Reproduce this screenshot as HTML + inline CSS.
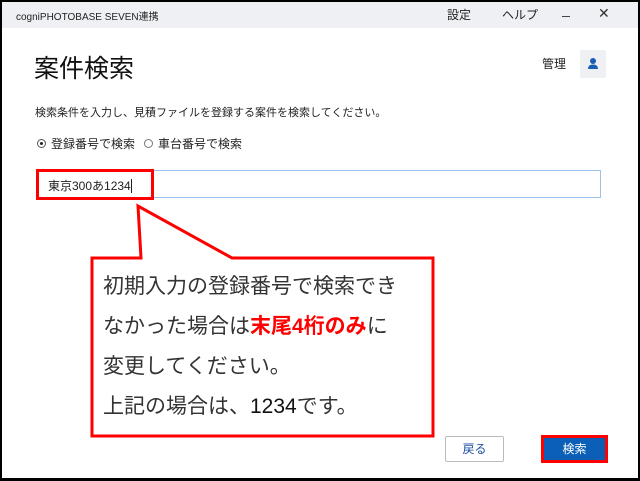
<!DOCTYPE html>
<html><head><meta charset="utf-8"><style>
*{margin:0;padding:0;box-sizing:border-box}
body{width:640px;height:481px;overflow:hidden;background:#000;font-family:"Liberation Sans","Noto Sans CJK JP",sans-serif;position:relative}
.win{position:absolute;left:2px;top:2px;width:636px;height:476px;background:#fff}
.tb{position:absolute;left:0;top:0;width:636px;height:26px;background:#eef0f4}
.a{position:absolute;white-space:nowrap}
</style></head><body>
<div class="win">
<div class="tb"></div>
<div class="a" style="left:14px;top:6px;font-size:10px;color:#222">cogniPHOTOBASE SEVEN連携</div>
<div class="a" style="left:445px;top:4px;font-size:12px;color:#222">設定</div>
<div class="a" style="left:500px;top:4px;font-size:12px;color:#222">ヘルプ</div>
<div class="a" style="left:560px;top:14px;width:8px;height:1px;background:#444"></div>
<div class="a" style="left:596px;top:3px;font-size:14px;color:#333">✕</div>
<div class="a" style="left:32px;top:47px;font-size:25px;color:#111">案件検索</div>
<div class="a" style="left:540px;top:53px;font-size:12px;color:#222">管理</div>
<div class="a" style="left:578px;top:48px;width:26px;height:28px;background:#eef0f3;border-radius:2px"></div>
<svg class="a" style="left:584px;top:55px" width="14" height="14"><circle cx="7" cy="4" r="3" fill="#1a5fb4"/><path d="M2 12 Q2 7.5 7 7.5 Q12 7.5 12 12Z" fill="#1a5fb4"/></svg>
<div class="a" style="left:33px;top:102px;font-size:11px;color:#222">検索条件を入力し、見積ファイルを登録する案件を検索してください。</div>
<div class="a" style="left:35px;top:137px;width:9px;height:9px;border:1px solid #555;border-radius:50%"></div>
<div class="a" style="left:38px;top:140px;width:3px;height:3px;background:#222;border-radius:50%"></div>
<div class="a" style="left:49px;top:133px;font-size:12px;color:#222">登録番号で検索</div>
<div class="a" style="left:142px;top:137px;width:9px;height:9px;border:1px solid #777;border-radius:50%"></div>
<div class="a" style="left:156px;top:133px;font-size:12px;color:#222">車台番号で検索</div>
<div class="a" style="left:34px;top:168px;width:565px;height:28px;border:1px solid #9cc2ea"></div>
<div class="a" style="left:34px;top:167px;width:118px;height:31px;border:3px solid #f00"></div>
<div class="a" style="left:46px;top:175px;font-size:12px;color:#222">東京300あ1234<span style="display:inline-block;width:1px;height:14px;background:#222;vertical-align:-3px"></span></div>
<svg class="a" style="left:0;top:0" width="636" height="476">
<path d="M90 256 H139 L136 204 L230 256 H431 V434 H90 Z" fill="#fff" stroke="#f00" stroke-width="3"/>
</svg>
<div class="a" style="left:101px;top:265px;font-size:21px;line-height:40px;color:#333">初期入力の登録番号で検索でき<br>なかった場合は<b style="color:#f00">末尾4桁のみ</b>に<br>変更してください。<br>上記の場合は、<span style="color:#111">1234</span>です。</div>
<div class="a" style="left:443px;top:434px;width:59px;height:26px;border:1px solid #bbb;border-radius:2px;font-size:12px;color:#1a4fa0;text-align:center;line-height:24px">戻る</div>
<div class="a" style="left:539px;top:433px;width:67px;height:28px;border:3px solid #f00;background:#0b5fb6;font-size:12px;color:#fff;text-align:center;line-height:22px">検索</div>
</div>
</body></html>
